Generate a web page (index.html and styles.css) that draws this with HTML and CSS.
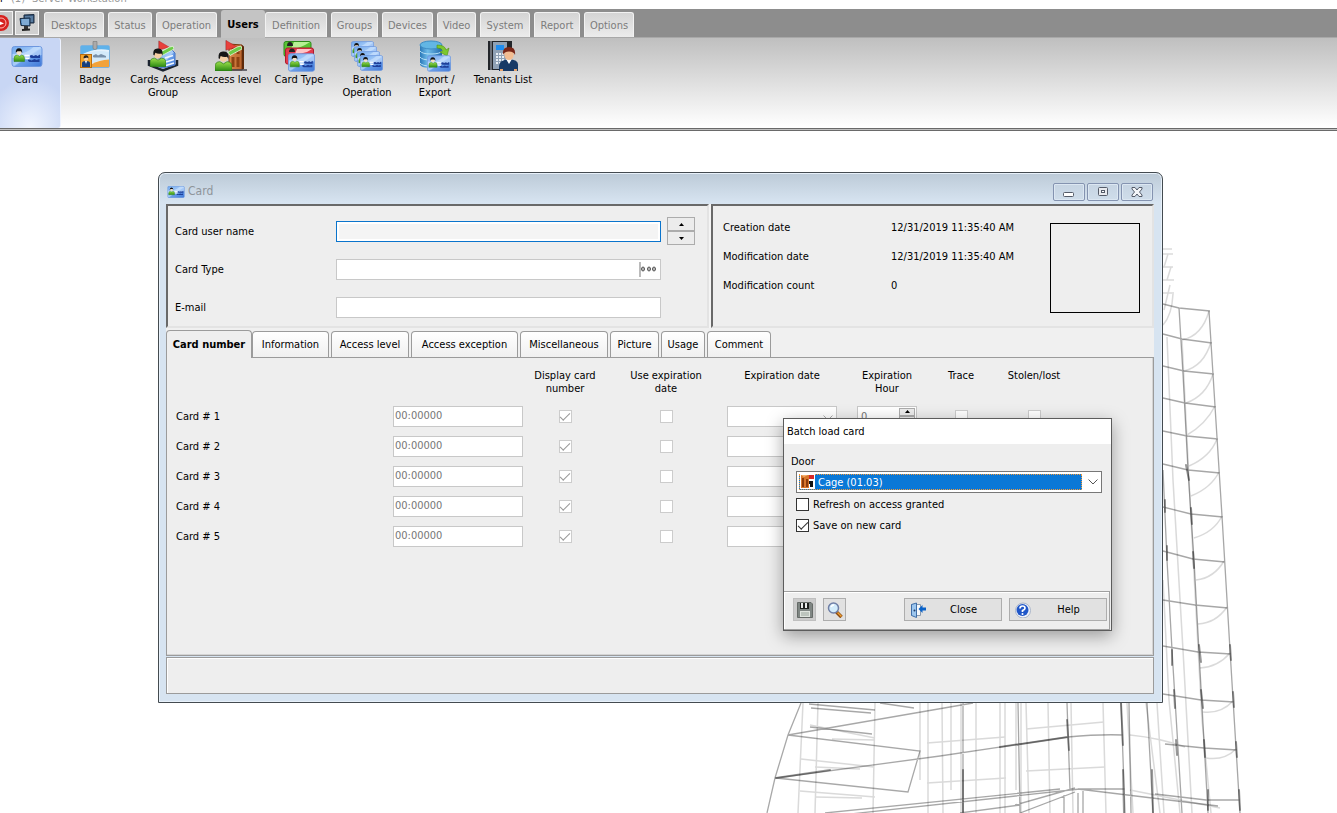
FILE: index.html
```html
<!DOCTYPE html>
<html lang="en">
<head>
<meta charset="utf-8">
<title>Server Workstation</title>
<link rel="stylesheet" href="styles.css">
</head>
<body>
<svg class="defs" aria-hidden="true">
  <defs>
    <linearGradient id="gBlue" x1="0" y1="0" x2="1" y2="1"><stop offset="0" stop-color="#6fa8ee"/><stop offset=".5" stop-color="#a9cdf8"/><stop offset=".55" stop-color="#6a9fea"/><stop offset="1" stop-color="#3f78d8"/></linearGradient>
    <linearGradient id="gGreen" x1="0" y1="0" x2="0" y2="1"><stop offset="0" stop-color="#9be04a"/><stop offset="1" stop-color="#2c8a12"/></linearGradient>
    <linearGradient id="gDb" x1="0" y1="0" x2="1" y2="0"><stop offset="0" stop-color="#2a78b8"/><stop offset=".35" stop-color="#6fbdea"/><stop offset="1" stop-color="#2268aa"/></linearGradient>
    <linearGradient id="gWood" x1="0" y1="0" x2="1" y2="0"><stop offset="0" stop-color="#d98a4a"/><stop offset="1" stop-color="#b9642d"/></linearGradient>
    <symbol id="person" viewBox="0 0 12 14">
      <path d="M0 14V11Q0 7.500 3.500 7.500L6 9 8.500 7.500Q12 7.500 12 11V14Z" fill="url(#gGreen)" stroke="#2b7a14" stroke-width=".5"/>
      <circle cx="6" cy="4.500" r="3" fill="#f6cfa4"/>
      <path d="M2.500 5Q2 0 6 .3 10 0 9.500 5.500L8.500 4Q6 4.500 4 3.500L3.300 5.500Z" fill="#161616"/>
    </symbol>
    <symbol id="idcard" viewBox="0 0 31 21">
      <rect x=".5" y=".5" width="30" height="20" rx="2.500" fill="url(#gBlue)" stroke="#6d97df"/>
      <path d="M1 8Q14 9 22 1H28Q30 1 30 3V9Q16 15 1 12Z" fill="#cfe4ff" opacity=".6"/>
      <path d="M2.500 15.500V12.500Q2.500 9 6 9L8 10.500 10 9Q13 9 13 12.500V15.500Z" fill="url(#gGreen)" stroke="#2b7a14" stroke-width=".5"/>
      <circle cx="7.500" cy="6.300" r="2.600" fill="#f6e0c4"/>
      <path d="M4.300 6.800Q4 2.300 7.500 2.300 11 2.300 10.700 7L9.500 5.300 6 5.300Z" fill="#111"/>
      <path d="M18.500 11.500V9.500L20.500 9 22 10 24.500 9 26 10 28.500 8.500V12H20Z" fill="#1d3f9a"/>
      <path d="M16.500 15V13.500L18 13.500 20 14.500 23 13 25 14 28 13V16H18Z" fill="#1d3f9a"/>
      <path d="M13 9.500H18M14 12.500H18" stroke="#fff" stroke-width="1.500"/>
    </symbol>
    <symbol id="flag" viewBox="0 0 18 20">
      <path d="M2 0V20" stroke="#999" stroke-width="1"/>
      <path d="M2 .5L13 7 2 10Z" fill="#e8413c" stroke="#b41f22" stroke-width=".5"/>
      <path d="M4 12L13 7 17 6 18 9 6 15.500Z" fill="#6ccc48" stroke="#eafbe0" stroke-width=".8"/>
    </symbol>
    <symbol id="door" viewBox="0 0 18 28">
      <path d="M1 1L14 2V27H1Z" fill="url(#gWood)" stroke="#7c3a10"/>
      <path d="M3.500 4H6.500V11H3.500ZM8.500 4.500H11.500V11H8.500ZM3.500 14H6.500V24H3.500ZM8.500 14H11.500V24H8.500Z" fill="#8d4213"/>
      <path d="M14 2L16 3.500V26L14 27Z" fill="#5e2a0a"/>
    </symbol>
    <symbol id="chev" viewBox="0 0 10 6"><path d="M.5 .5L5 5 9.500 .5" fill="none" stroke="currentColor"/></symbol>
  </defs>
</svg>

<header class="app-head">
  <div class="caption"><span class="caption-mark">r</span><span>(1)</span><span>Server Workstation</span></div>
  <nav class="menu">
    <div class="quick">
      <button class="quick-btn" aria-label="Stop"><svg viewBox="0 0 12 20" width="12" height="20"><circle cx="1" cy="10" r="8" fill="#d6221f"/><circle cx="1" cy="10" r="5" fill="none" stroke="#ffb9b3"/><path d="M0 8.500L4 10.500 0 12Z" fill="#fff"/></svg></button>
      <button class="quick-btn quick-on" aria-label="Workstation"><svg viewBox="0 0 20 20" width="20" height="20"><path d="M7 2L17 1.500V10H7Z" fill="#35577c" stroke="#1c2c40"/><path d="M8 4H16M8 6H16M8 8H16" stroke="#8fb4d6" stroke-width=".8"/><path d="M3 5.500L13 5V13L4 12.500Z" fill="#3c78b4" stroke="#1c2c40"/><path d="M4.500 7H12M4.500 9H12M5 11H12" stroke="#d3e9fb" stroke-width=".9"/><path d="M7 13H11V16H7Z" fill="#333"/><path d="M5 17L13 16.500" stroke="#222" stroke-width="2"/></svg></button>
    </div>
    <div class="tabs">
      <button class="tab">Desktops</button><button class="tab">Status</button><button class="tab">Operation</button><button class="tab tab-on">Users</button><button class="tab">Definition</button><button class="tab">Groups</button><button class="tab">Devices</button><button class="tab">Video</button><button class="tab">System</button><button class="tab">Report</button><button class="tab">Options</button>
    </div>
  </nav>
  <div class="ribbon">
    <button class="tool tool-on"><svg class="tool-icon" viewBox="0 0 32 32"><use href="#idcard" x="0" y="6" width="32" height="21"/></svg>Card</button>
    <button class="tool"><svg class="tool-icon" viewBox="0 0 32 32"><rect x="1.500" y="5.500" width="29" height="22" rx="1.500" fill="#e6f2fc" stroke="#7fb2dc"/><path d="M2 6H30V10Q16 7 2 15Z" fill="#5fb2ea"/><path d="M2 15Q16 9 30 12V20Q18 20 13 23H2Z" fill="#d4eafa"/><path d="M13 24Q20 20 30 19.500V27H13Z" fill="#f2a23a"/><path d="M14 1.500H18V8Q18 9.500 16 9.500 14 9.500 14 8Z" fill="#aaa" stroke="#777" stroke-width=".6"/><rect x="1.500" y="14.500" width="11" height="13" fill="#f5a428" stroke="#b76c12"/><path d="M3 27V23Q3 21 7 21 11 21 11 23V27Z" fill="#173f7c"/><path d="M6 21L7 24 8 21Z" fill="#fff"/><circle cx="7" cy="18.500" r="2.300" fill="#f6cfa4"/><path d="M4.500 18.500Q4.500 15.300 7 15.300T9.500 18.500L8 17.500Z" fill="#222"/><path d="M14 17V15.500L17 14 19 15.500 22 14 27 16V17.500H15Z" fill="#7890aa"/></svg>Badge</button>
    <button class="tool"><svg class="tool-icon" viewBox="0 0 32 32"><path d="M2 20V25L16 30.500 30 25V20" fill="none" stroke="#1c2430" stroke-width="2.500"/><path d="M14 12L25 10 28 13V25L16 28 12 27Z" fill="url(#gBlue)" stroke="#4774c4"/><path d="M18 18L26 15.500M19 22L27 19.500M19 25.500L27 23" stroke="#f1f7ff" stroke-width="1.500"/><use href="#flag" x="10" y="0" width="17" height="20"/><use href="#person" x="3" y="8" width="16" height="19"/></svg>Cards Access Group</button>
    <button class="tool"><svg class="tool-icon" viewBox="0 0 32 32"><use href="#door" x="13" y="3" width="18" height="28"/><path d="M12 30H32" stroke="#46464e" stroke-width="1.500"/><use href="#flag" x="9" y="0" width="18" height="20"/><use href="#person" x="0" y="11" width="17" height="20"/></svg>Access level</button>
    <button class="tool"><svg class="tool-icon" viewBox="0 0 32 32"><rect x="1" y="1.500" width="27" height="15" rx="2" fill="#58c534" stroke="#2c8a1a"/><path d="M11 2H27L22 5Q14 9 8 9Z" fill="#b7f195"/><path d="M4 6Q4 2 7 2T10 6Z" fill="#222"/><rect x="2.500" y="8" width="28" height="16" rx="2" fill="#e23a4c" stroke="#ad1b2c"/><path d="M14 9H29L24 12Q18 14 12 14Z" fill="#ffc4c6"/><path d="M6 12Q6 8.500 9 8.500T12 12Z" fill="#222"/><use href="#idcard" x="5" y="13" width="27" height="19"/></svg>Card Type</button>
    <button class="tool"><svg class="tool-icon" viewBox="0 0 32 32"><use href="#idcard" x="0" y="1" width="23" height="16"/><use href="#idcard" x="3" y="6" width="23" height="16"/><use href="#idcard" x="6" y="11" width="23" height="16"/><use href="#idcard" x="9" y="15" width="23" height="16"/></svg>Batch Operation</button>
    <button class="tool"><svg class="tool-icon" viewBox="0 0 32 32"><path d="M1 5V24Q1 28 12 28T23 24V5Z" fill="url(#gDb)"/><path d="M1 11Q3 14 12 14T23 11M1 17Q3 20 12 20T23 17M1 23Q3 26 12 26" fill="none" stroke="#b5e0f6"/><ellipse cx="12" cy="5" rx="11" ry="4" fill="#62b6e4" stroke="#3d8cc4"/><path d="M18 5Q26 5 27 10L30 8 28 16 21 12 24 11Q23 8 18 8Z" fill="#7cc82e" stroke="#4f9012" stroke-width=".6"/><use href="#idcard" x="8" y="15" width="24" height="17"/></svg>Import / Export</button>
    <button class="tool"><svg class="tool-icon" viewBox="0 0 32 32"><rect x="1" y="1" width="24" height="29" fill="#22252a"/><rect x="3" y="1" width="2" height="29" fill="#6b7078"/><rect x="6" y="2" width="14" height="27" fill="#8fa1b5"/><rect x="9" y="5" width="8" height="5" fill="#1f8df0"/><path d="M9 14H17M9 17H17M9 20H17M9 23H17" stroke="#e9eff5" stroke-width="2" stroke-dasharray="2 1"/><path d="M12 31V26Q12 19.500 22 19.500T31 26V31Z" fill="#183a66"/><path d="M19 19L22 24 25 19Z" fill="#fff"/><ellipse cx="22" cy="14.500" rx="4.700" ry="5.500" fill="#f3bd92"/><path d="M16 15Q15 7 22 7T28 15Q27 11.500 22 11.500T16 15Z" fill="#7a2718"/><path d="M13 31H16V29H13ZM27 31H30V29H27Z" fill="#e7a36b"/></svg>Tenants List</button>
  </div>
</header>

<main class="desktop">
  <svg class="sketch" viewBox="760 230 490 583" aria-hidden="true">
    <g class="far">
      <path d="M1163 249H1172M1163 254H1173M1163 267H1173M1163 280H1174M1163 293H1174M1168 254L1164 267M1171 267L1167 280M1170 285L1164 310M1173 294Q1172 315 1163 325"/>
      <path d="M1167 337L1173 480 1183 650 1192 813M1182 340L1190 500 1202 720 1211 813M1163 580L1169 700 1180 813"/>
      <path d="M803 703L798 813M818 703L815 813M875 703L873 813M920 703V780M928 703V813M942 703L943 813M951 703V790M961 703V813M976 703V813M1000 703V813M1005 703V813M1016 703V790M1021 703V813M1026 703L1029 813M1048 703L1050 813M1071 703L1073 813M1103 703L1106 813M1127 703L1133 813M1146 703L1160 813M1157 703L1164 813"/>
      <path d="M927 743L1005 737M927 783L1006 778M1026 729L1104 722M1026 771L1105 767M1130 735Q1160 738 1185 747M1130 790L1220 808M810 725L875 738M832 739L875 740M801 759L874 767M815 767L860 769M800 791L875 797M815 797L862 798"/>
      <path d="M1209 311Q1202 336 1182 340M1211 342Q1204 366 1184 371M1213 374Q1206 396 1186 403M1215 406Q1206 424 1187 435M1217 439Q1210 457 1189 466M1219 472Q1211 488 1191 496M1222 516Q1214 532 1194 538M1224 561Q1214 578 1196 580M1227 607Q1216 623 1198 624M1230 653Q1218 667 1200 668M1233 701Q1221 714 1203 712M1236 749Q1224 761 1206 758"/>
    </g>
    <g class="mid">
      <path d="M1209 311L1215 406 1222 516 1230 650 1240 813M1179 308L1183 374 1188 470 1194 560 1199 652 1208 813M1163 470L1167 560 1172 650 1182 813"/>
      <path d="M1163 304L1179 308 1210 311M1163 334L1182 339 1212 343M1163 366L1184 371 1214 374M1163 398L1185 403 1216 407M1163 431L1187 436 1218 439M1163 464L1188 470 1220 473M1163 507L1191 514 1223 517M1163 551L1193 559 1225 562M1163 600L1195 605 1228 608M1163 646L1198 652 1231 654M1163 694L1201 700 1234 702M1165 744L1204 748 1237 750M1155 794L1206 800 1240 800"/>
      <path d="M801 703L788 735 775 778 767 813M788 735L973 703M776 778L940 756 1068 737Q1100 734 1123 735M788 735L920 751 908 792 776 778M880 703L914 708M825 813L1060 789M832 816L1080 789M809 704L875 710M811 708L871 713M810 727L872 734M963 703V813M1018 703L1020 813M1067 703L1070 790M1121 703L1125 813M1129 703L1131 813M1147 703L1153 813M1078 789L1218 806M1080 789H1125M1015 805L1075 788M1020 813L1075 792M960 813L1020 805M1064 795V813M1078 793V813M1083 789V813"/>
    </g>
    <g class="dark">
      <path d="M1067 720L1069 750M1121 703L1123 745M1172 650V665M1199 645L1201 662M1230 645L1231 660M1174 690L1175 708M1201 690L1203 708M1233 692L1234 707M1176 740L1177 755M1204 740L1205 757M1236 742L1237 757M1208 790V810M1239 790L1240 810M1186 465L1189 480M1191 508L1192 524M1193 552L1194 568M1165 500V512M1167 546V560M1000 747L1068 737M776 778L830 770M1123 770L1124 813M1152 770L1153 813M963 770V813"/>
    </g>
  </svg>

  <section class="window" aria-label="Card">
    <div class="titlebar">
      <svg class="title-icon" viewBox="0 0 16 11"><use href="#idcard" width="16" height="11"/></svg>
      <h1 class="title">Card</h1>
      <button class="win-btn" aria-label="Minimize"><svg viewBox="0 0 14 12" width="14" height="12"><rect x="1.500" y="6.500" width="10" height="4" rx="1" fill="#fff" stroke="#545b68"/></svg></button>
      <button class="win-btn" aria-label="Maximize"><svg viewBox="0 0 14 12" width="14" height="12"><rect x="2.500" y="1.500" width="9" height="8" rx="1" fill="#e8eaee" stroke="#545b68"/><rect x="5.500" y="4.500" width="3" height="2" fill="#fff" stroke="#545b68"/></svg></button>
      <button class="win-btn" aria-label="Close window"><svg viewBox="0 0 14 12" width="14" height="12"><path d="M2 1.500H5L7 4 9 1.500H12V3L9.500 6 12 9V10.500H9L7 8 5 10.500H2V9L4.500 6 2 3Z" fill="#f4f6f9" stroke="#545b68"/></svg></button>
    </div>

    <div class="panels">
      <form class="panel identity">
        <label for="user">Card user name</label>
        <div class="field-row"><input id="user" class="box focus" type="text">
          <span class="spin"><button type="button" aria-label="Previous"><svg viewBox="0 0 5 3" width="5" height="3"><path d="M0 3L2.500 0 5 3Z"/></svg></button><button type="button" aria-label="Next"><svg viewBox="0 0 5 3" width="5" height="3"><path d="M0 0L2.500 3 5 0Z"/></svg></button></span></div>
        <label for="ctype">Card Type</label>
        <div class="field-row"><span class="box lookup"><input id="ctype" type="text"><button type="button" aria-label="Choose card type"><svg viewBox="0 0 16 6" width="16" height="6" fill="#bbb" stroke="#555"><ellipse cx="2" cy="3" rx="1.500" ry="2"/><ellipse cx="8" cy="3" rx="1.500" ry="2"/><ellipse cx="13" cy="3" rx="1.500" ry="2"/></svg></button></span></div>
        <label for="email">E-mail</label>
        <div class="field-row"><input id="email" class="box" type="text"></div>
      </form>
      <div class="panel record">
        <dl class="facts">
          <dt>Creation date</dt><dd>12/31/2019 11:35:40 AM</dd>
          <dt>Modification date</dt><dd>12/31/2019 11:35:40 AM</dd>
          <dt>Modification count</dt><dd>0</dd>
        </dl>
        <div class="photo"></div>
      </div>
    </div>

    <div class="pages">
      <button class="page page-on">Card number</button><button class="page">Information</button><button class="page">Access level</button><button class="page">Access exception</button><button class="page">Miscellaneous</button><button class="page">Picture</button><button class="page">Usage</button><button class="page">Comment</button>
    </div>
    <div class="sheet">
      <table class="cards">
        <colgroup><col class="c-name"><col class="c-num"><col class="c-disp"><col class="c-use"><col class="c-date"><col class="c-hour"><col class="c-trace"><col class="c-lost"><col></colgroup>
        <thead><tr><td></td><td></td><th>Display card<br>number</th><th>Use expiration<br>date</th><th>Expiration date</th><th>Expiration<br>Hour</th><th>Trace</th><th>Stolen/lost</th><td></td></tr></thead>
        <tbody>
          <tr><th scope="row">Card # 1</th><td><input class="box num" aria-label="Card 1 number" value="00:00000" disabled></td><td><input type="checkbox" class="chk" aria-label="Display card 1 number" checked disabled></td><td><input type="checkbox" class="chk" aria-label="Use expiration date 1" disabled></td><td><span class="date"><select class="box" aria-label="Expiration date 1" disabled><option></option></select><svg class="chev" aria-hidden="true"><use href="#chev"/></svg></span></td><td><span class="box hour"><input aria-label="Expiration hour 1" value="0" disabled><span class="spin"><button disabled aria-label="Hour up"><svg viewBox="0 0 5 3" width="5" height="3"><path d="M0 3L2.500 0 5 3Z"/></svg></button><button disabled aria-label="Hour down"><svg viewBox="0 0 5 3" width="5" height="3"><path d="M0 0L2.500 3 5 0Z"/></svg></button></span></span></td><td><input type="checkbox" class="chk" aria-label="Trace 1" disabled></td><td><input type="checkbox" class="chk" aria-label="Stolen or lost 1" disabled></td><td></td></tr>
          <tr><th scope="row">Card # 2</th><td><input class="box num" aria-label="Card 2 number" value="00:00000" disabled></td><td><input type="checkbox" class="chk" aria-label="Display card 2 number" checked disabled></td><td><input type="checkbox" class="chk" aria-label="Use expiration date 2" disabled></td><td><select class="box" aria-label="Expiration date 2" disabled><option></option></select></td><td></td><td></td><td></td><td></td></tr>
          <tr><th scope="row">Card # 3</th><td><input class="box num" aria-label="Card 3 number" value="00:00000" disabled></td><td><input type="checkbox" class="chk" aria-label="Display card 3 number" checked disabled></td><td><input type="checkbox" class="chk" aria-label="Use expiration date 3" disabled></td><td><select class="box" aria-label="Expiration date 3" disabled><option></option></select></td><td></td><td></td><td></td><td></td></tr>
          <tr><th scope="row">Card # 4</th><td><input class="box num" aria-label="Card 4 number" value="00:00000" disabled></td><td><input type="checkbox" class="chk" aria-label="Display card 4 number" checked disabled></td><td><input type="checkbox" class="chk" aria-label="Use expiration date 4" disabled></td><td><select class="box" aria-label="Expiration date 4" disabled><option></option></select></td><td></td><td></td><td></td><td></td></tr>
          <tr><th scope="row">Card # 5</th><td><input class="box num" aria-label="Card 5 number" value="00:00000" disabled></td><td><input type="checkbox" class="chk" aria-label="Display card 5 number" checked disabled></td><td><input type="checkbox" class="chk" aria-label="Use expiration date 5" disabled></td><td><select class="box" aria-label="Expiration date 5" disabled><option></option></select></td><td></td><td></td><td></td><td></td></tr>
        </tbody>
      </table>
    </div>
    <div class="statusbar"></div>
  </section>

  <section class="dialog" role="dialog" aria-label="Batch load card">
    <h2 class="dialog-title">Batch load card</h2>
    <div class="dialog-body">
      <label for="door-list">Door</label>
      <div class="combo">
        <select id="door-list"><option>Cage (01.03)</option></select>
        <svg class="combo-icon" viewBox="0 0 16 16" aria-hidden="true"><rect x="1" width="15" height="15" fill="#fff"/><rect x="2" y="1" width="8" height="13" fill="#d9772c"/><path d="M3 4H5V13H3ZM7 5H9V13H7Z" fill="#8d3b0a"/><path d="M2 1H9L5 3Z" fill="#f4b070"/><rect x="10" y="1" width="5" height="4" fill="#d62a2a"/><path d="M10 7H14V13H11V10H10Z" fill="#141414"/></svg>
        <svg class="chev" aria-hidden="true"><use href="#chev"/></svg>
      </div>
      <label class="check"><input type="checkbox" class="chk"> Refresh on access granted</label>
      <label class="check"><input type="checkbox" class="chk" checked> Save on new card</label>
    </div>
    <div class="dialog-foot">
      <button class="btn btn-icon btn-off" aria-label="Save"><svg viewBox="0 0 16 16" width="16" height="16"><path d="M.5 .5H14L15.500 2V15.500H.5Z" fill="#7f8683" stroke="#666b68"/><rect x="3" y="1" width="9" height="6" fill="#1d1f1e"/><rect x="4" y="1" width="2" height="5" fill="#e9ebea"/><rect x="8" y="1" width="2" height="5" fill="#e9ebea"/><rect x="3" y="9" width="10" height="6" fill="#dfe5df"/><path d="M4 11H12M4 13H12" stroke="#9aa59c"/></svg></button>
      <button class="btn btn-icon" aria-label="Search"><svg viewBox="0 0 16 16" width="16" height="16"><path d="M9.500 10L14.500 15" stroke="#8a4a12" stroke-width="3.500"/><path d="M10.500 10.500L14.500 14.500" stroke="#f0a030" stroke-width="1.500"/><circle cx="6.500" cy="6" r="5" fill="#d3ecfb" stroke="#6f7fa6" stroke-width="1.500"/><path d="M4 5Q5 3 7 3" fill="none" stroke="#fff" stroke-width="1.500"/></svg></button>
      <button class="btn btn-text btn-first"><svg viewBox="0 0 16 16" width="16" height="16"><path d="M1.500 2.500H10.500V13.500H1.500Z" fill="#f5f8fb" stroke="#8a9bb0"/><path d="M1.500 2.500L6.500 1V15.500L1.500 13.500Z" fill="#9cc6ee" stroke="#3f6ea8"/><circle cx="4.500" cy="8.500" r="1" fill="#1f3b66"/><path d="M16 5.500V8.500H12.500V11L8.500 7 12.500 3V5.500Z" fill="#0a62c8"/></svg><span>Close</span></button>
      <button class="btn btn-text"><svg viewBox="0 0 16 16" width="16" height="16"><circle cx="8" cy="8.500" r="7.500" fill="#eef1f8" stroke="#a9b4c8"/><circle cx="7.500" cy="8" r="6" fill="#1f56c8"/><path d="M5 6.500Q5 4 7.500 4T10 6.200Q10 7.500 7.500 8.500V10" fill="none" stroke="#fff" stroke-width="1.700"/><circle cx="7.500" cy="12" r="1" fill="#fff"/></svg><span>Help</span></button>
    </div>
  </section>
</main>
</body>
</html>
```
FILE: styles.css
```css
* { box-sizing: border-box; }
html, body { height: 100%; }
body {
  margin: 0;
  display: flex;
  flex-direction: column;
  overflow: hidden;
  background: #fff;
  color: #000;
  font: 11px/13px Tahoma, "DejaVu Sans Condensed", "Noto Sans", sans-serif;
}
button, input, select { font: inherit; color: inherit; margin: 0; padding: 0; }
h1, h2, dl, dd { margin: 0; font-weight: normal; font-size: inherit; }
.defs { position: absolute; width: 0; height: 0; }

/* application header */
.caption { display: flex; align-items: flex-end; gap: 7px; height: 9px; padding-bottom: 3px; overflow: hidden; color: #999; font-size: 11px; line-height: 14px; }
.caption-mark { width: 4px; color: #000; }
.menu { display: flex; height: 29px; background: #8d8d8d; border-bottom: 1px solid #a8a8a8; }
.quick { display: flex; align-items: flex-start; padding-top: 2px; gap: 2px; width: 44px; }
.quick-btn { display: flex; align-items: center; height: 24px; border: 1px solid #f4f4f4; border-left: 0; background: #c8c8c8; }
.quick-on { flex: none; width: 24px; justify-content: center; border-left: 1px solid #f4f4f4; background: #d0d0d0; }
.tabs { display: grid; grid-template-columns: 64px 48px 65px 44px 66px 51px 55px 43px 54px 50px 54px; align-items: end; }
.tab { height: 25px; margin-right: 4px; border: 1px solid #f2f2f2; border-bottom: 0; border-radius: 3px 3px 0 0; background: linear-gradient(#d4d4d4, #ececec); color: #7c7c7c; }
.tab-on { height: 28px; margin: 0 0 -1px; border: 0; background: #c4c4c4; color: #000; font-weight: bold; }
.ribbon { display: flex; height: 93px; background: linear-gradient(#bfbfbf, #fff 89px); border-bottom: 3px double #6a6a6a; }
.tool { display: flex; flex-direction: column; align-items: center; gap: 1px; width: 68px; padding: 2px 0 0; border: 0; background: none; }
.tool-on { width: 61px; padding-right: 7px; border-radius: 0 3px 3px 0; background: radial-gradient(ellipse 44px 50px at 50% 100%, #f2f6ff, #c8d6f4); border-right: 1px solid #eef3ff; }
.tool-icon { width: 32px; height: 32px; flex: none; }

/* desktop */
.desktop { position: relative; flex: 1; }
.sketch { position: absolute; left: 760px; top: 99px; width: 490px; height: 583px; fill: none; }
.far { stroke: #000; opacity: .14; stroke-width: 1.5px; }
.mid { stroke: #000; opacity: .34; stroke-width: 1.3px; }
.dark { stroke: #000; opacity: .4; stroke-width: 2px; stroke-linecap: round; }

/* card window */
.window { position: absolute; left: 158px; right: 174px; top: 41px; padding: 0 8px 8px 7px; border: 1px solid #444b50; border-radius: 7px 7px 0 0; background: linear-gradient(#bccad7, #d7e4f1 30px); box-shadow: inset 0 0 0 1px #e8f1fa; }
.titlebar { display: flex; align-items: center; gap: 2px; height: 31px; padding: 6px 1px 0; }
.title-icon { width: 18px; height: 12px; }
.title { flex: 1; padding-left: 1px; color: #8e949a; font-size: 12px; }
.win-btn { display: flex; align-items: center; justify-content: center; width: 32px; height: 18px; border: 1px solid #8493b0; border-radius: 2px; background: linear-gradient(#c6d4e2, #cfddea); box-shadow: inset 0 0 0 1px #dce7f2; }
.panels { display: grid; grid-template-columns: 543fr 443fr; gap: 2px; background: #f4f4f4; }
.panel { height: 124px; border: 2px solid; border-color: #696969 #e3e3e3 #e3e3e3 #696969; background: #eee; }
.identity { display: grid; grid-template-columns: 168px minmax(0, 1fr); grid-auto-rows: 38px; align-items: center; padding: 6px 12px 0 0; }
.identity label { padding-left: 7px; }
.record { display: flex; justify-content: space-between; padding: 17px 12px 0 10px; }
.field-row { display: flex; align-items: center; gap: 6px; }
.box { width: 325px; height: 21px; min-width: 0; border: 1px solid #c8c8c8; background: #fff; border-radius: 0; outline: 0; }
.focus { border-color: #0a74cc; background: #f4f4f4; box-shadow: inset 0 0 0 2px #fff; }
.lookup { display: flex; align-items: center; padding-right: 3px; }
.lookup input { flex: 1; height: 100%; border: 0; background: none; }
.lookup button { display: flex; align-items: center; height: 15px; border: 0; border-left: 2px solid #bbb; background: none; }
.spin { display: flex; flex-direction: column; width: 28px; }
.spin button { display: flex; align-items: center; justify-content: center; height: 14px; border: 1px solid #acacac; background: #ececec; }
.facts { display: grid; grid-template-columns: 168px auto; grid-auto-rows: 29px; margin-top: -2px; }
.photo { width: 90px; height: 90px; border: 1px solid #000; }

.pages { display: grid; grid-template-columns: 86px 79px 80px 109px 90px 51px 46px 66px; align-items: end; height: 29px; background: #f0f0f0; }
.page { height: 26px; margin: 0 2px 0 0; border: 1px solid #9b9b9b; border-bottom: 0; border-radius: 4px 4px 0 0; background: linear-gradient(#fff, #f0f0f0); white-space: nowrap; }
.page-on { height: 28px; margin: 0 0 -1px; background: #eee; font-weight: bold; z-index: 1; }
.sheet { height: 299px; border: 1px solid #9b9b9b; box-shadow: inset -1px -1px 0 #d4d4d4; background: #eee; padding-top: 11px; }
.statusbar { height: 37px; margin-top: 1px; border: 1px solid #9b9b9b; box-shadow: inset 1px 1px 0 #fff; background: #eee; }

.cards { width: 100%; table-layout: fixed; border-collapse: collapse; }
.cards th, .cards td { padding: 0; font-weight: normal; text-align: center; vertical-align: middle; }
.cards thead th { vertical-align: top; height: 32px; }
.cards tbody tr { height: 30px; }
.cards tbody th { text-align: left; padding-left: 9px; }
.cards td .box { display: block; width: 100%; }
.c-name { width: 226px; } .c-num { width: 130px; } .c-disp { width: 84px; } .c-use { width: 118px; } .c-date { width: 114px; } .c-hour { width: 96px; } .c-trace { width: 52px; } .c-lost { width: 94px; }
.num { padding: 0 0 1px 1px; color: #767676; }
select { appearance: none; }
.cards select.box { width: 110px; margin-left: 2px; opacity: 1; }
.date { position: relative; display: block; }
.chev { width: 10px; height: 6px; color: #555; }
.date .chev { position: absolute; right: 6px; top: 9px; color: #aaa; }
.cards td .hour { display: flex; width: 60px; margin: 0 auto; padding: 1px; color: #767676; }
.hour input { flex: 1; min-width: 0; border: 0; background: none; padding-left: 2px; }
.hour .spin { width: 16px; }
.hour .spin button { flex: 1; height: auto; }

.chk { appearance: none; flex: none; display: grid; place-content: center; width: 13px; height: 13px; border: 1px solid #333; background: #fff; color: #333; }
.chk:checked::before { content: ""; width: 9px; height: 4px; margin-top: -3px; border: solid currentColor; border-width: 0 0 1px 1px; rotate: -45deg; }
.chk:disabled { border-color: #ccc; color: #999; }
.cards .chk { margin: 1px auto 0; }

/* dialog */
.dialog { position: absolute; left: 783px; top: 287px; width: 329px; border: 1px solid #5c5c5c; background: #eee; box-shadow: 0 5px 16px rgba(0, 0, 0, .35); }
.dialog-title { height: 25px; padding: 6px 3px; background: #fff; }
.dialog-body { display: flex; flex-direction: column; height: 147px; padding: 11px 9px 0 7px; }
.combo { position: relative; display: flex; align-items: center; height: 22px; margin: 3px 0 1px 5px; padding: 2px; border: 1px solid #777; background: #fff; }
.combo select { flex: 1; height: 16px; padding-left: 18px; margin-right: 6px; border: 1px dotted #f39a3a; border-radius: 0; background: #0a78d7; color: #fff; outline: 0; }
.combo .chev { margin-right: 1px; }
.combo-icon { position: absolute; left: 2px; top: 2px; width: 16px; height: 16px; }
.check { display: flex; align-items: center; gap: 4px; height: 21px; margin-left: 5px; }
.dialog-foot { display: flex; align-items: center; gap: 7px; height: 39px; padding: 0 2px 2px 9px; margin-right: 1px; border: 1px solid #a0a0a0; border-left: 0; box-shadow: inset 1px 1px 0 #fff; }
.btn { display: flex; align-items: center; height: 23px; border: 1px solid #adadad; background: #e1e1e1; }
.btn-icon { justify-content: center; width: 23px; }
.btn-off { background: #ccc; border-color: #bfbfbf; }
.btn-text { width: 98px; padding-left: 5px; }
.btn-text span { flex: 1; text-align: center; }
.btn-first { margin-left: auto; }
```
